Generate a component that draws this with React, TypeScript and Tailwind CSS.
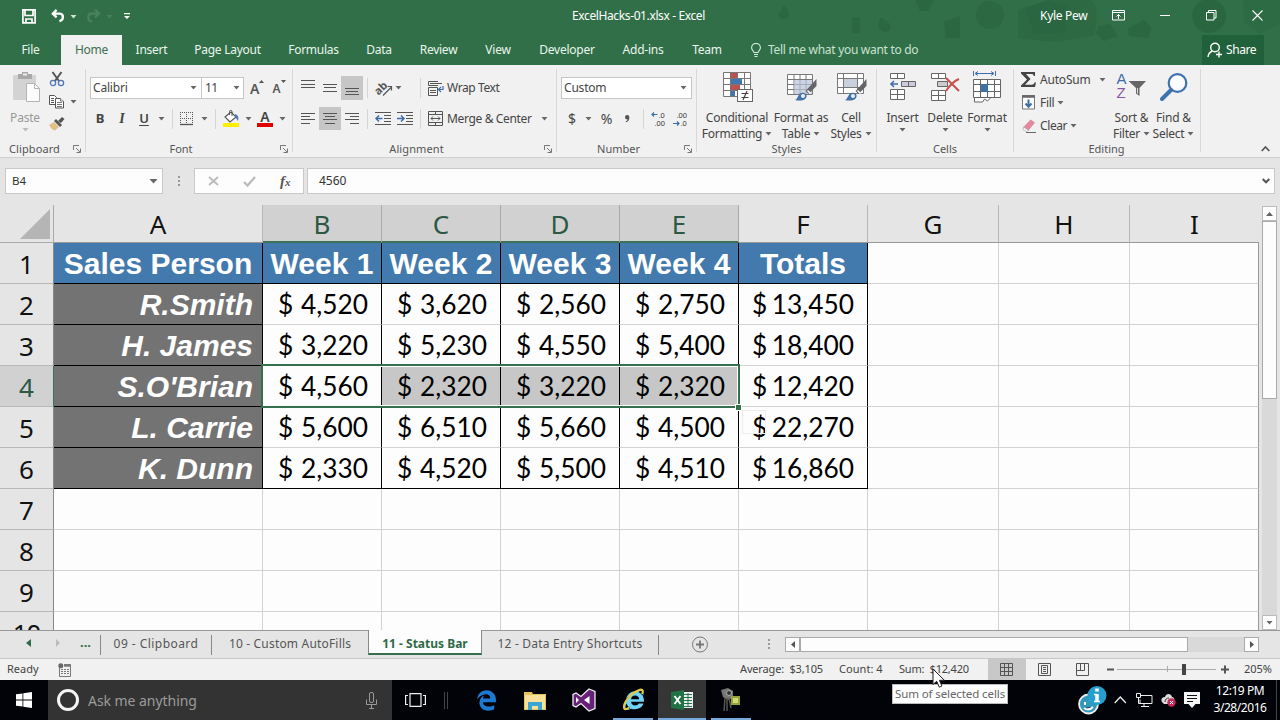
import React from "react";
import { FaEdgeLegacy, FaInternetExplorer } from "react-icons/fa6";

const UI = "font-['Noto_Sans',sans-serif]";
type Kids = { children?: React.ReactNode; c?: string };

const Arrow = ({ c = "text-[#666]" }: { c?: string }) => (
  <svg className={`shrink-0 ${c}`} width="7" height="4" viewBox="0 0 7 4"><path d="M.5 0h6L3.5 3.6z" fill="currentColor" /></svg>
);
const Slot = ({ children, c = "w-[22px]" }: Kids) => (
  <div className={`flex h-full shrink-0 items-center justify-center ${c}`}>{children}</div>
);
const Sep = ({ c = "h-5" }: { c?: string }) => <div className={`w-px shrink-0 bg-[#d5d5d5] ${c}`} />;

const Launcher = () => (
  <svg width="8" height="8" viewBox="0 0 8 8" fill="none" stroke="#777"><path d="M.5 5V.5H6M3 3l4 4M7.5 3.5v4h-4" /></svg>
);

function Group({ w, label, launcher, labelPad = "", children }: { w: string; label: string; launcher?: boolean; labelPad?: string; children: React.ReactNode }) {
  return (
    <section className={`flex h-full shrink-0 ${w}`}>
      <div className="flex min-w-0 flex-1 flex-col">
        <div className="h-[75px]">{children}</div>
        <div className="flex h-[17px] items-center">
          <span className={`flex-1 text-center text-[11px] leading-[17px] text-[#555] ${labelPad}`}>{label}</span>
          {launcher && <span className="mr-1"><Launcher /></span>}
        </div>
      </div>
      <div className="mt-1 h-[83px] w-px bg-[#d8d8d8]" />
    </section>
  );
}

/* ---------- ribbon icons ---------- */
const Lines = ({ rows }: { rows: [number, number, number][] }) => (
  <svg width="16" height="16" viewBox="0 0 16 16" stroke="#555">
    {rows.map(([y, a, b]) => <path key={y} d={`M${a} ${y}.5H${b}`} />)}
  </svg>
);
const PasteIcon = () => (
  <svg width="30" height="32" viewBox="0 0 30 32">
    <rect x="1" y="4" width="23" height="25" rx="1" fill="#d3d3d3" />
    <path d="M6 3h4V1h6v2h4v5H6z" fill="#a8a8a8" /><rect x="11" y="2.5" width="4" height="2" fill="#eee" />
    <path d="M14.5 12.5h8l5 5v13h-13z" fill="#fcfcfc" stroke="#b4b4b4" /><path d="M22.5 12.5v5h5" fill="none" stroke="#b4b4b4" />
  </svg>
);
const CutIcon = () => (
  <svg width="16" height="16" viewBox="0 0 16 16" fill="none">
    <path d="M3.5 1l6.5 9M12.5 1L6 10" stroke="#555" strokeWidth="2" />
    <circle cx="4" cy="12" r="2.6" stroke="#4f78b5" strokeWidth="1.3" /><circle cx="12" cy="12" r="2.6" stroke="#4f78b5" strokeWidth="1.3" />
  </svg>
);
const CopyIcon = () => (
  <svg width="16" height="15" viewBox="0 0 16 15" fill="#fff" stroke="#555">
    <path d="M.5 1.5h5l2 2v7h-7z" /><path d="M2 4.5h3M2 6.5h3M2 8.5h3" />
    <path d="M6.500 4.500h5l3 3v6.500h-8z" /><path d="M8 8.500h5M8 10.500h5M8 12.500h5M11.500 4.500v2.500h3" strokeWidth=".8" />
  </svg>
);
const BrushIcon = () => (
  <svg width="16" height="15" viewBox="0 0 16 15">
    <path d="M0 9l5-3 5 5-4 3.500c-2-.5-4-2-6-5.500z" fill="#e3bf86" /><path d="M5 5l2-2 6 6-2 2z" fill="#555" /><path d="M9 5l4-4 2.500 2L12 7z" fill="#555" />
  </svg>
);
const BorderIcon = () => (
  <svg width="14" height="14" viewBox="0 0 14 14" fill="none" stroke="#555">
    <path strokeDasharray="1 1" d="M0 .5h13M.5 0v13M12.500 0v13M6.500 0v13M0 6.500h13" /><path d="M0 12.500h13" strokeWidth="1.300" />
  </svg>
);
const BucketIcon = () => (
  <svg width="17" height="17" viewBox="0 0 17 17">
    <path d="M2 7l6-5 5 5-6 5z" fill="#fff" stroke="#555" strokeWidth="1.100" /><path d="M6.500 5V1.500c0-1.500 2.500-1.500 2.500 0V6" fill="none" stroke="#555" />
    <path d="M12 4c3 1 4 3 3 7-1-2-2-3-3-3z" fill="#4f78b5" /><rect y="13" width="16" height="4" fill="#ffee00" />
  </svg>
);
const OrientIcon = () => (
  <svg className="overflow-visible" width="17" height="15" viewBox="0 0 17 15" fill="none" stroke="#555">
    <text x="-1.500" y="11" fontSize="11" fontWeight="700" transform="rotate(-45 5 8)" fill="#555" stroke="none" fontFamily="Noto Sans">ab</text>
    <path d="M7 14.500l8-8M11.500 5.500H15.500v4" strokeWidth="1.200" />
  </svg>
);
const IndentIcon = ({ right }: { right?: boolean }) => (
  <svg width="17" height="14" viewBox="0 0 17 14" fill="none" stroke="#555">
    <path d="M0 .5h16M9 3.500h7M9 6.500h7M9 9.500h7M0 12.500h16" />
    <path d={right ? "M0 6.500h7M4 3.500l3 3-3 3" : "M7.500 6.500h-7M4 3.500l-3 3 3 3"} stroke="#3d6ea8" strokeWidth="1.500" />
  </svg>
);
const WrapIcon = () => (
  <svg width="16" height="15" viewBox="0 0 16 15" fill="none" stroke="#555">
    <path d="M10 4.500H.5V.5H10M.5 6.500h9v8h-9zM2 2.500h12M2 9.500h6M2 11.500h6" /><path d="M15 5v3.500h-4M13 6l-2.500 2.500L13 11" stroke="#3d6ea8" strokeWidth="1.200" />
  </svg>
);
const MergeIcon = () => (
  <svg width="15" height="15" viewBox="0 0 15 15" fill="none" stroke="#555">
    <path d="M.5.5h14v14H.5zM.5 3.500h14M.5 11.500h14M7.500 .5v3M7.500 11.500v3M3 7.500h9M5 5.500l-2 2 2 2M10 5.500l2 2-2 2" />
  </svg>
);
const DecIcon = ({ less }: { less?: boolean }) => (
  <svg className="overflow-visible" width="16" height="16" viewBox="0 0 16 16">
    <text x={less ? 3.5 : 7.5} y="6.500" fontSize="7.500" fill="#333" fontFamily="Liberation Sans">{less ? ".00" : ".0"}</text>
    <text x={less ? 7.500 : 3.500} y="15" fontSize="7.500" fill="#333" fontFamily="Liberation Sans">{less ? ".0" : ".00"}</text>
    <path d={less ? "M0 12.500h6M4 10.500l2 2-2 2" : "M6.500 3.500h-6M3 1.500l-2 2 2 2"} fill="none" stroke="#3d6ea8" strokeWidth="1.200" />
  </svg>
);
const CondIcon = () => (
  <svg width="30" height="30" viewBox="0 0 30 30">
    <path d="M.5.5h27v24H.5zM.5 6.500h27M.5 12.500h27M.5 18.500h27M7.500 .5v24M14.500 .5v24M21.500 .5v24" fill="#fff" stroke="#777" />
    <path d="M8 1h6v5H8zM8 13h9v5H8z" fill="#c0504d" /><path d="M8 7h11v5H8zM8 19h4v5H8z" fill="#3f78b0" />
    <rect x="14.500" y="17.500" width="15" height="12" fill="#fff" stroke="#666" /><path d="M18.500 21.500h7M18.500 25.500h7M24 19l-4 9" stroke="#444" strokeWidth="1.200" />
  </svg>
);
const PaintBrush = () => (
  <g><path d="M29.500 7v7l-8 8-3-3z" fill="#666" /><path d="M20.500 18.500l3 3" stroke="#fff" strokeWidth="1.500" />
    <path d="M8 28c3-1 3-6 6-7 4-1 7 2 5 5-2 3-7 3-11 2z" fill="#4472a8" /><circle cx="16" cy="24" r="2" fill="#e9f1fa" /></g>
);
const TableIcon = () => (
  <svg width="30" height="30" viewBox="0 0 30 30">
    <path d="M.5 2.500h25v20H.5zM.5 7.500h25M.5 12.500h25M.5 17.500h25M7 2.500v20M13 2.500v20M19 2.500v20" fill="#fff" stroke="#777" />
    <path d="M7 8h18v14H7z" fill="#b8c3d8" fillOpacity=".7" /><PaintBrush />
  </svg>
);
const CellStyleIcon = () => (
  <svg width="30" height="30" viewBox="0 0 30 30">
    <path d="M.5 1.500h26v20H.5zM.5 6.500h26M.5 15.500h26M6.500 1.500v20M20.500 1.500v20" fill="#fff" stroke="#777" />
    <path d="M7 7h13v8H7z" fill="#c9d0de" /><PaintBrush />
  </svg>
);
const InsertIcon = () => (
  <svg width="28" height="28" viewBox="0 0 28 28" fill="#fff" stroke="#666">
    <path d="M1.500.5h14v5h-14zM8.500.5v5M1.500 16.500h14v10h-14zM8.500 16.500v10M1.500 21.500h14" /><path d="M12.500 8.500h14v5h-14zM19.500 8.500v5" fill="#ccd" />
    <path d="M9 11H2M5 8l-3 3 3 3" fill="none" stroke="#3d6ea8" strokeWidth="1.600" />
  </svg>
);
const DeleteIcon = () => (
  <svg width="30" height="28" viewBox="0 0 30 28" fill="#fff" stroke="#666">
    <path d="M1.500.5h14v5h-14zM8.500.5v5M1.500 17.500h14v10h-14zM8.500 17.500v10M1.500 22.500h14" /><path d="M7.500 8.500h10v5h-10z" fill="#ccc" />
    <path d="M16 5l13 13M29 6c-5 2-9 6-13 12" fill="none" stroke="#c9504c" strokeWidth="2" />
  </svg>
);
const FormatIcon = () => (
  <svg width="28" height="32" viewBox="0 0 28 32" fill="none" stroke="#666">
    <path d="M.5 8.500h27v18H.5zM.5 13.500h27M.5 20.500h27M7.500 8.500v18M14.500 8.500v18M21.500 8.500v18" fill="#fff" />
    <path d="M8 13h7v8H8z" fill="#3f72aa" stroke="none" /><path d="M1.500 27v4h8l2-3 3 2 3-3" fill="#fff" />
    <path d="M.5 0v5M22.500 0v5M3 2.500h17M5 .5l-3 2 3 2M18 .5l3 2-3 2" stroke="#3d6ea8" />
  </svg>
);
const SumIcon = () => (
  <svg width="15" height="15" viewBox="0 0 15 15"><path d="M0 0h14v4h-1.200c-.3-1.500-1-2-2.500-2H5l4.500 5L4 12.700h6.500c1.800 0 2.500-.7 3-2.200H15l-1 4.500H0v-1.500l6-6-6-6z" fill="#444" /></svg>
);
const FillIcon = () => (
  <svg width="14" height="15" viewBox="0 0 14 15" fill="none"><path d="M.5.5h12v13.500H.5z" fill="#fff" stroke="#777" /><path d="M0 1.500h13" stroke="#666" strokeWidth="2.500" /><path d="M6.500 4.500V12M3.500 8.500l3 3.300 3-3.300" stroke="#3d6ea8" strokeWidth="2" /></svg>
);
const EraserIcon = () => (
  <svg width="15" height="14" viewBox="0 0 15 14"><path d="M1.500 8l7-7.500 4.500 3-6.500 8z" fill="#e28a9d" /><path d="M1.500 8l5 3.500-2 1-3.500-2z" fill="#fff" stroke="#999" strokeWidth=".6" /><path d="M4 13.500h10" stroke="#666" /></svg>
);
const SortIcon = () => (
  <div className="flex h-[30px] w-[30px]">
    <div className="flex w-[11px] flex-col font-['Liberation_Sans',sans-serif] text-[15px] leading-[14px]"><span className="text-[#3d6ea8]">A</span><span className="text-[#8a55a5]">Z</span></div>
    <svg width="19" height="30" viewBox="11 0 19 30"><path d="M11.500 9h17.500L22.500 16v8l-3.500-2.500V16z" fill="#666" /><path d="M20.500 16v5.500" stroke="#ddd" /></svg>
  </div>
);
const FindIcon = () => (
  <svg width="28" height="28" viewBox="0 0 28 28" fill="none" stroke="#3f72b0"><circle cx="17.500" cy="10" r="8.800" fill="#fcfcff" strokeWidth="2.200" /><path d="M11 17l-9 9" strokeWidth="4" strokeLinecap="round" /></svg>
);

const Big = ({ w, icon, a, b, dim, iconPad = "" }: { w: string; icon: React.ReactNode; a: string; b?: string; dim?: boolean; iconPad?: string }) => (
  <div className={`flex shrink-0 flex-col items-center whitespace-nowrap text-[12px] ${w} ${dim ? "text-[#999]" : "text-[#444]"}`}>
    <div className={`flex h-[34px] items-center pt-0.5 ${iconPad}`}>{icon}</div>
    <span className="mt-[7px] h-4 leading-4 tracking-[-0.2px]">{a}</span>
    <span className="flex h-4 items-center gap-[3px] leading-4 tracking-[-0.25px]">{b}<Arrow c={`${b ? "" : "-mt-2"} ${dim ? "text-[#bbb]" : "text-[#666]"}`} /></span>
  </div>
);

const menu: [string, string][] = [
  ["File", "w-[61px]"], ["Home", "w-[61px]"], ["Insert", "w-[59px]"], ["Page Layout", "w-[93px]"], ["Formulas", "w-[79px]"], ["Data", "w-[52px]"],
  ["Review", "w-[67px]"], ["View", "w-[52px]"], ["Developer", "w-[86px]"], ["Add-ins", "w-[66px]"], ["Team", "w-[62px]"],
];

function Header() {
  return (
    <header className="relative h-[65px] bg-[#316f48] text-white">
      <svg className="absolute right-0 top-0" width="560" height="56" viewBox="720 0 560 56" fill="#296540">
        <path opacity=".7" d="M784 4c4 6 6 9 5 12-2 4-9 4-11 0 0-3 4-6 6-12zM852 17h8v16h-8zM880 18c7 1 12 6 10 12-5 4-10 1-12-4zM915 0h19l-6 11h-8zM944 22l16-6v22h-14z" />
        <circle cx="990" cy="15" r="14" opacity=".6" />
        <path opacity=".55" d="M1018 10l32-10h38c10 0 10 16 6 36l-40 6-36-4z" /><path opacity=".7" d="M1026 8l22-8 20 6-4 26-30 2z" />
        <path opacity=".75" d="M1098 26l12-2 8 12-14 5-8-7zM1128 28l16-8 7 7-2 11-20-2z" /><circle cx="1209" cy="16" r="17" opacity=".8" />
        <path opacity=".45" d="M1243 0h37v24l-20 10-16-12z" />
      </svg>
      <div className="relative flex h-[35px] items-center">
        <svg className="ml-[22px] mt-[-2px] h-[15px] w-[14px]" viewBox="0 0 14 15" fill="none" stroke="#fff" strokeWidth="1.700"><path d="M.9.9h12.200v13H.9zM3 1v5.500h8V1M4 14v-4h6v4" /></svg>
        <svg className="ml-[15px] mt-[-4px]" width="14" height="14" viewBox="0 0 15 14" fill="none" stroke="#fff" strokeWidth="2.500"><path d="M6 .5L2 4.500 6 8.500M2 4.500h7c5 0 5 7 0 8" /></svg>
        <span className="ml-[5px] mt-[-2px] flex"><Arrow c="text-[#cfe3d6]" /></span>
        <svg className="ml-[9px] mt-[-4px]" width="15" height="14" viewBox="0 0 15 14" fill="none" stroke="#49805d" strokeWidth="2.300"><path d="M9 .5l4 4L9 8.500M13 4.500H6c-5 0-5 7 0 8" /></svg>
        <span className="ml-[5px] mt-[-2px] flex"><Arrow c="text-[#49805d]" /></span>
        <svg className="ml-[11px] mt-[-2px]" width="7" height="7" viewBox="0 0 7 7" fill="#fff"><path d="M0 0h6v1.200H0zM0 3h6L3 6z" /></svg>
        <span className="ml-[441px] mt-[-4px] w-[136px] whitespace-nowrap text-[12px] tracking-[-0.38px]">ExcelHacks-01.xlsx - Excel</span>
        <span className="ml-[332px] mt-[-4px] w-[72px] whitespace-nowrap text-[12px] tracking-[-0.3px]">Kyle Pew</span>
        <svg className="mt-[-5px]" width="14" height="11" viewBox="0 0 14 11" fill="none" stroke="#fff"><path d="M.5.5h12v9.500H.5zM.5 2.500h12M6.500 9V4.500M4.500 6.500l2-2 2 2" /></svg>
        <svg className="ml-[34px] mt-[-4px]" width="11" height="2" viewBox="0 0 11 2" fill="#fff"><path d="M0 0h10v1H0z" /></svg>
        <svg className="ml-[35px] mt-[-5px]" width="11" height="11" viewBox="0 0 11 11" fill="none" stroke="#fff"><path d="M.5 2.500h7.500V10H.5zM2.500 2.500v-2h7.500V8H8" /></svg>
        <svg className="ml-[35px] mt-[-5px]" width="11" height="11" viewBox="0 0 11 11" stroke="#fff" strokeWidth="1.100"><path d="M.5.5l10 10M10.500.5l-10 10" /></svg>
      </div>
      <nav className="relative flex h-[30px] items-center text-[12px] tracking-[-0.25px]">
        {menu.map(([m, w], i) => (
          <div key={m} className={`flex h-full shrink-0 items-center justify-center whitespace-nowrap ${w} ${i === 1 ? "bg-[#f1f1f1] text-[#3d6f50]" : "text-[#eaf6ee]"}`}>{m}</div>
        ))}
        <svg className="ml-[13px]" width="10" height="15" viewBox="0 0 10 15" fill="none" stroke="#d7ecdf" strokeWidth="1.100"><path d="M3 9.500C3 8 .6 7.300.6 4.800a4.400 4.400 0 0 1 8.800 0C9.400 7.300 7 8 7 9.500zM3 11.500h4M3.500 13.500h3" /></svg>
        <span className="ml-[7px] w-[434px] whitespace-nowrap tracking-[-0.3px] text-[#c9e2d1]">Tell me what you want to do</span>
        <div className="flex h-full w-[62px] items-center bg-[#20603a] pl-[5px]">
          <svg width="16" height="16" viewBox="0 0 16 16" fill="none" stroke="#fff" strokeWidth="1.400"><circle cx="8" cy="5.500" r="4.300" /><path d="M1 15c.3-3.500 2-5 4.500-6M12 9.500v6M9 12.500h6" /></svg>
          <span className="ml-[3px] tracking-[-0.4px]">Share</span>
        </div>
      </nav>
    </header>
  );
}

function Ribbon() {
  return (
    <div className="flex h-[93px] border-b border-[#cfcfcf] bg-[#f1f1f1]">
      <Group w="w-[86px]" label="Clipboard" launcher labelPad="-ml-1 tracking-[0.1px]">
        <div className="flex pt-1">
          <Big w="w-[50px]" icon={<PasteIcon />} a="Paste" dim iconPad="pl-1" />
          <div className="-ml-px flex flex-col gap-[7px] pt-[2px]">
            <CutIcon /><div className="flex items-center gap-[5px]"><CopyIcon /><Arrow /></div><BrushIcon />
          </div>
        </div>
      </Group>

      <Group w="w-[207px]" label="Font" launcher labelPad="-ml-1">
        <div className="flex h-[35px] items-end pb-px pl-1 text-[12px] text-[#444]">
          <div className="flex h-[22px] w-[112px] items-center justify-between border border-[#c6c6c6] bg-white pl-[2px] pr-1"><span className="tracking-[-0.2px]">Calibri</span><Arrow /></div>
          <div className="-ml-px flex h-[22px] w-[43px] items-center justify-between border border-[#c6c6c6] bg-white pl-[3px] pr-[3px]"><span className="tracking-[-0.6px]">11</span><Arrow /></div>
          <div className="ml-[6px] flex h-[22px] items-center text-[14px] font-semibold text-[#555]">A<svg className="mb-[13px]" width="5" height="4" viewBox="0 0 5 4"><path d="M0 3h5L2.500 0z" fill="#555" /></svg></div>
          <div className="ml-[8px] flex h-[22px] items-center pt-px text-[12px] font-semibold text-[#555]">A<svg className="mb-[13px]" width="5" height="4" viewBox="0 0 5 4"><path d="M0 0h5L2.500 3z" fill="#555" /></svg></div>
        </div>
        <div className="mt-[7px] flex h-[23px] items-center pl-[3px] text-[13px] text-[#444]">
          <Slot><b>B</b></Slot><Slot><i className="font-['Liberation_Serif',serif] text-[14px] font-bold">I</i></Slot><Slot><span className="font-semibold underline underline-offset-2">U</span></Slot>
          <Slot c="w-[12px]"><Arrow /></Slot><Slot c="w-[10px]"><Sep /></Slot><Slot c="w-[20px]"><BorderIcon /></Slot><Slot c="w-[14px]"><Arrow /></Slot>
          <Slot c="w-[8px]"><Sep /></Slot><Slot c="w-[24px]"><BucketIcon /></Slot><Slot c="w-[10px]"><Arrow /></Slot>
          <Slot c="w-[24px]"><span className="flex h-[17px] w-4 flex-col items-center border-b-4 border-[#e00000] text-[14px] font-semibold leading-[13px]">A</span></Slot><Slot c="w-[10px]"><Arrow /></Slot>
        </div>
      </Group>

      <Group w="w-[264px]" label="Alignment" launcher labelPad="-ml-1 tracking-[0.1px]">
        <div className="flex h-[35px] items-end pl-1 text-[12px] text-[#444]">
          <div className="flex h-[24px] items-center">
            <Slot><Lines rows={[[0, 1, 15], [4, 1, 15], [7, 1, 15]]} /></Slot>
            <Slot><Lines rows={[[4, 1, 15], [7, 2, 14], [11, 1, 15]]} /></Slot>
            <Slot c="w-[22px] bg-[#c6c6c6]"><Lines rows={[[8, 1, 15], [11, 2, 14], [14, 1, 15]]} /></Slot>
            <Slot c="w-[8px]"><Sep /></Slot><Slot c="w-[22px] pl-1"><OrientIcon /></Slot><Slot c="w-[10px]"><Arrow /></Slot>
            <div className="w-[17px]" /><Sep /><div className="w-[7px]" /><WrapIcon /><span className="ml-[3px] whitespace-nowrap tracking-[-0.4px]">Wrap Text</span>
          </div>
        </div>
        <div className="mt-[7px] flex h-[23px] items-center pl-1 text-[12px] text-[#444]">
          <Slot><Lines rows={[[2, 1, 15], [5, 1, 10], [8, 1, 15], [12, 1, 10]]} /></Slot>
          <Slot c="w-[22px] bg-[#c6c6c6]"><Lines rows={[[2, 1, 15], [5, 3, 13], [8, 1, 15], [12, 3, 13]]} /></Slot>
          <Slot><Lines rows={[[2, 1, 15], [5, 6, 15], [8, 1, 15], [12, 6, 15]]} /></Slot>
          <Slot c="w-[8px]"><Sep /></Slot><Slot c="w-[24px]"><IndentIcon /></Slot><Slot c="w-[21px]"><IndentIcon right /></Slot>
          <div className="w-[4px]" /><Sep /><div className="w-[7px]" /><MergeIcon /><span className="ml-1 w-[94px] whitespace-nowrap tracking-[-0.35px]">Merge &amp; Center</span><Arrow />
        </div>
      </Group>

      <Group w="w-[140px]" label="Number" launcher labelPad="-ml-1">
        <div className="flex h-[35px] items-end pb-px pl-1 text-[12px] text-[#444]">
          <div className="flex h-[22px] w-[131px] items-center justify-between border border-[#c6c6c6] bg-white pl-[2px] pr-1"><span className="tracking-[-0.2px]">Custom</span><Arrow /></div>
        </div>
        <div className="mt-[7px] flex h-[23px] items-center pl-1 text-[14px] text-[#444]">
          <Slot>$</Slot><Slot c="w-[11px]"><Arrow /></Slot><Slot c="w-[25px]">%</Slot><Slot c="w-[17px]"><svg width="5" height="8" viewBox="0 0 5 8"><path d="M0 2.200a2.200 2.200 0 0 1 4.400 0C4.500 5 3 6.800.8 7.300v-1C2 5.900 2.500 5.200 2.500 4.300 1 4.600 0 3.600 0 2.200z" fill="#555" /></svg></Slot>
          <Slot c="w-[14px]"><Sep /></Slot><Slot c="w-[17px]"><DecIcon /></Slot><Slot c="w-[27px]"><DecIcon less /></Slot>
        </div>
      </Group>

      <Group w="w-[180px]" label="Styles">
        <div className="flex pl-[6px] pt-1">
          <Big w="w-[68px]" icon={<CondIcon />} a="Conditional" b="Formatting" iconPad="pl-[2px]" /><Big w="w-[60px]" icon={<TableIcon />} a="Format as" b="Table" iconPad="pl-[2px]" /><Big w="w-[40px]" icon={<CellStyleIcon />} a="Cell" b="Styles" iconPad="pl-[2px]" />
        </div>
      </Group>

      <Group w="w-[137px]" label="Cells">
        <div className="flex pl-1 pt-1">
          <Big w="w-[43px]" icon={<InsertIcon />} a="Insert" /><Big w="w-[42px]" icon={<DeleteIcon />} a="Delete" /><Big w="w-[42px]" icon={<FormatIcon />} a="Format" />
        </div>
      </Group>

      <Group w="w-[187px]" label="Editing" labelPad="-ml-px">
        <div className="flex pl-[7px] text-[12px] text-[#444]">
          <div className="flex w-[90px] flex-col pt-[3px]">
            <div className="flex h-[23px] items-center"><span className="w-[19px]"><SumIcon /></span><span className="w-[59px] tracking-[-0.2px]">AutoSum</span><Arrow /></div>
            <div className="flex h-[23px] items-center gap-[3px]"><span className="w-4 pl-px"><FillIcon /></span><span className="tracking-[-0.3px]">Fill</span><Arrow /></div>
            <div className="flex h-[23px] items-center gap-[3px]"><span className="w-4 pl-px"><EraserIcon /></span><span className="tracking-[-0.4px]">Clear</span><Arrow /></div>
          </div>
          <div className="flex pt-1"><Big w="w-[41px]" icon={<SortIcon />} a="Sort &amp;" b="Filter" /><Big w="w-[43px]" icon={<FindIcon />} a="Find &amp;" b="Select" /></div>
        </div>
      </Group>
      <div className="flex flex-1 items-end justify-end pb-[5px] pr-[10px]"><svg width="9" height="6" viewBox="0 0 9 6" fill="none" stroke="#555" strokeWidth="1.700"><path d="M.7 5l3.800-4 3.800 4" /></svg></div>
    </div>
  );
}

function FormulaBar() {
  return (
    <div className="flex h-[47px] items-start bg-[#e5e5e5] px-[5px] pt-[10px] text-[11px] text-[#333]">
      <div className="flex h-[26px] w-[158px] items-center justify-between border border-[#c9c9c9] bg-[#fdfdfd] pl-[6px] pr-1"><span className="text-[11.500px]">B4</span><svg width="9" height="5" viewBox="0 0 9 5"><path d="M.5 0h8l-4 4.500z" fill="#666" /></svg></div>
      <svg className="ml-[14px] mt-2" width="4" height="11" viewBox="0 0 4 11" fill="#999"><path d="M1 0h2v2H1zM1 4h2v2H1zM1 8h2v2H1z" /></svg>
      <div className="ml-[13px] flex h-[26px] w-[110px] items-center border border-[#c9c9c9] bg-[#fdfdfd]">
        <svg className="ml-[13px]" width="11" height="10" viewBox="0 0 11 10" stroke="#bbb" strokeWidth="1.800"><path d="M1 1l9 8M10 1L1 9" /></svg>
        <svg className="ml-[24px]" width="13" height="11" viewBox="0 0 13 11" fill="none" stroke="#bbb" strokeWidth="2.300"><path d="M1 6l3.500 3.500L12 1" /></svg>
        <i className="ml-[24px] font-['Liberation_Serif',serif] text-[15px] font-bold leading-none text-[#555]">f<span className="text-[11px]">x</span></i>
      </div>
      <div className="ml-[3px] flex h-[26px] w-[968px] items-center justify-between border border-[#c9c9c9] bg-[#fdfdfd] pl-[11px] pr-1"><span className="text-[12px]">4560</span><svg width="8" height="6" viewBox="0 0 8 6" fill="none" stroke="#555" strokeWidth="2"><path d="M.7 1L4 4.300 7.300 1" /></svg></div>
    </div>
  );
}

const cols: [string, string][] = [
  ["A", "w-[209px]"], ["B", "w-[119px]"], ["C", "w-[119px]"], ["D", "w-[119px]"], ["E", "w-[119px]"],
  ["F", "w-[129px]"], ["G", "w-[131px]"], ["H", "w-[131px]"], ["I", "w-[129px]"],
];
const data: string[][] = [
  ["Sales Person", "Week 1", "Week 2", "Week 3", "Week 4", "Totals"],
  ["R.Smith", "4,520", "3,620", "2,560", "2,750", "13,450"],
  ["H. James", "3,220", "5,230", "4,550", "5,400", "18,400"],
  ["S.O'Brian", "4,560", "2,320", "3,220", "2,320", "12,420"],
  ["L. Carrie", "5,600", "6,510", "5,660", "4,500", "22,270"],
  ["K. Dunn", "2,330", "4,520", "5,500", "4,510", "16,860"],
  [], [], [], [],
];

function cellClass(r: number, c: number) {
  if (r > 5 || c > 5) return `border-b-[#d2d2d2] bg-[#fdfdfd] ${c === 8 ? "border-r-[#999]" : "border-r-[#d2d2d2]"}`;
  if (r === 0) return "justify-center border-black bg-[#437aad] pt-px font-['Liberation_Sans',sans-serif] font-bold text-[30px] text-white";
  if (c === 0) return "justify-end border-black bg-[#737373] pr-[9px] pt-px font-['Liberation_Sans',sans-serif] font-bold italic text-[30px] text-white";
  const base = "justify-between border-r-black pr-[13px] pl-[15px] pt-px font-['Lato',sans-serif] text-[26.300px] text-black";
  const edge = r === 5 ? "border-b-black" : "border-b-[#d2d2d2]";
  return `${base} ${edge} ${r === 3 && c > 1 && c < 5 ? "bg-[#c7c7c7]" : "bg-[#fdfdfd]"}`;
}

function Sheet() {
  return (
    <div className="flex h-[425px] bg-[#e5e5e5]">
      <div className="relative h-[425px] w-[1259px] overflow-hidden">
        <div className="flex h-[38px]">
          <div className="flex w-[54px] shrink-0 items-end justify-end border-b border-r border-[#aaa] pb-[3px] pr-[3px]"><svg width="30" height="30" viewBox="0 0 30 30"><path d="M30 0v30H0z" fill="#b5b5b5" /></svg></div>
          {cols.map(([n, w], i) => (
            <div key={n} className={`flex shrink-0 items-center justify-center pt-px text-[26px] leading-none ${w} ${i > 0 && i < 5 ? "border-b-2 border-r border-b-[#3c7354] border-r-[#aaa] bg-[#d1d1d1] text-[#2c5844]" : i === 8 ? "border-b border-b-[#999] text-[#111]" : "border-b border-r border-b-[#999] border-r-[#b8b8b8] text-[#111]"}`}>{n}</div>
          ))}
        </div>
        {data.map((row, r) => (
          <div key={r} className="flex h-[41px]">
            <div className={`flex w-[54px] shrink-0 items-center justify-center border-b border-r pt-px text-[26px] leading-none ${r === 9 ? "tracking-[-1px]" : ""} ${r === 3 ? "border-b-[#b8b8b8] border-r-[#3c7354] bg-[#d1d1d1] text-[#2c5844]" : "border-b-[#b8b8b8] border-r-[#888] text-[#111]"}`}>{r + 1}</div>
            {cols.map(([n, w], c) => (
              <div key={n} className={`flex shrink-0 items-center whitespace-nowrap border-b border-r leading-none ${w} ${cellClass(r, c)}`}>
                {r > 0 && r < 6 && c > 0 && c < 6 ? <><span className={c === 5 ? "-ml-[2px]" : ""}>$</span><span>{row[c]}</span></> : row[c]}
              </div>
            ))}
          </div>
        ))}
        <div className="absolute left-[261px] top-[159px] h-[44px] w-[479px] border-2 border-[#35704d] shadow-[inset_0_0_0_1px_#fff]" />
        <div className="absolute left-[735px] top-[199px] h-[7px] w-[7px] border border-white bg-[#35704d]" />
        <div className="absolute left-[742px] top-[205px] h-[24px] w-[24px] border border-[#ededed]" />
      </div>
      <div className="flex w-[21px] flex-col pl-[3px] pt-px">
        <div className="flex h-[15px] w-[15px] items-center justify-center border border-[#bbb] bg-[#fdfdfd]"><svg width="7" height="4" viewBox="0 0 7 4"><path d="M0 4h7L3.500 0z" fill="#666" /></svg></div>
        <div className="h-[178px] w-[15px] border border-[#aaa] bg-[#fdfdfd]" />
        <div className="w-[15px] flex-1 bg-[#d9d9d9]" />
        <div className="flex h-[15px] w-[15px] items-center justify-center border border-[#bbb] bg-[#fdfdfd]"><Arrow /></div>
      </div>
    </div>
  );
}

function SheetTabs() {
  return (
    <div className="flex h-[29px] border-b border-[#c6c6c6] bg-[#e5e5e5] text-[12px] text-[#555]">
      <div className="flex h-[24px] w-[368px] items-center border-t border-[#999]">
        <svg className="ml-[26px] mt-px" width="5" height="8" viewBox="0 0 5 8"><path d="M5 0v8L0 4z" fill="#2e6b49" /></svg>
        <svg className="ml-[25px] mt-px" width="5" height="8" viewBox="0 0 5 8"><path d="M0 0v8l4-4z" fill="#bbb" /></svg>
        <b className="ml-[19px] w-[20px] text-[13px] text-[#2e6b49]">...</b>
        <div className="mt-1 h-[20px] w-px bg-[#888]" /><span className="w-[110px] pt-0.5 text-center tracking-[0.45px]">09 - Clipboard</span>
        <div className="mt-1 h-[20px] w-px bg-[#888]" /><span className="w-[156px] pt-0.5 text-center tracking-[0.18px]">10 - Custom AutoFills</span>
      </div>
      <div className="flex h-[25px] w-[114px] items-center justify-center whitespace-nowrap border-x border-b-2 border-x-[#888] border-b-[#35704d] bg-[#fdfdfd] pt-1 font-bold text-[#2e6b49]">11 - Status Bar</div>
      <div className="flex h-[24px] flex-1 items-center border-t border-[#999]">
        <span className="w-[176px] pt-0.5 text-center tracking-[0.2px]">12 - Data Entry Shortcuts</span><div className="mt-1 h-[20px] w-px bg-[#888]" />
        <svg className="ml-[33px] mt-[4px]" width="17" height="17" viewBox="0 0 17 17" fill="none" stroke="#777"><circle cx="8" cy="8.500" r="7.500" /><path d="M8 4.500v8M4 8.500h8" strokeWidth="1.800" /></svg>
        <svg className="ml-[59px] mt-1" width="2" height="11" viewBox="0 0 2 11" fill="#999"><path d="M0 0h2v2H0zM0 4h2v2H0zM0 8h2v2H0z" /></svg>
        <div className="ml-[15px] mt-[4px] flex h-[15px] w-[15px] items-center justify-center border border-[#aaa] bg-[#fdfdfd]"><svg width="4" height="7" viewBox="0 0 4 7"><path d="M4 0v7L0 3.500z" fill="#555" /></svg></div>
        <div className="mt-[4px] h-[15px] w-[388px] border border-[#aaa] bg-[#fdfdfd]" /><div className="mt-[4px] h-[15px] w-[56px] bg-[#d9d9d9]" />
        <div className="mt-[4px] flex h-[15px] w-[15px] items-center justify-center border border-[#aaa] bg-[#fdfdfd]"><svg width="4" height="7" viewBox="0 0 4 7"><path d="M0 0v7l4-3.500z" fill="#555" /></svg></div>
      </div>
    </div>
  );
}

function StatusBar() {
  return (
    <div className="flex h-[21px] items-center bg-[#f1f1f1] text-[11px] text-[#444]">
      <span className="ml-[7px] w-[51px]">Ready</span>
      <svg width="14" height="14" viewBox="0 0 14 14" fill="none" stroke="#777"><path d="M1.500 5v8.500h11V1.500H6" /><path d="M6 2.500h6.500" strokeWidth="2.500" /><circle cx="2.800" cy="2.800" r="2.500" fill="#666" stroke="none" /><path d="M3 6.500h8M3 8.500h8M3 10.500h8" strokeDasharray="2 1" /></svg>
      <span className="ml-[668px] w-[99px] whitespace-nowrap tracking-[-0.15px]">Average:&nbsp; $3,105</span>
      <span className="w-[60px] whitespace-nowrap tracking-[0.05px]">Count: 4</span>
      <span className="w-[89px] whitespace-nowrap tracking-[-0.2px]">Sum:&nbsp; $12,420</span>
      <div className="flex h-full w-[38px] items-center justify-center bg-[#c8c8c8] pr-0.5"><svg width="13" height="13" viewBox="0 0 13 13" fill="none" stroke="#555"><path d="M.5.5h12v12H.5zM4.500.5v12M8.500.5v12M.5 4.500h12M.5 8.500h12" /></svg></div>
      <Slot c="w-[38px] pr-0.5"><svg width="13" height="13" viewBox="0 0 13 13" fill="none" stroke="#555"><path d="M.5.5h12v12H.5zM3.500 2.500h6v8h-6zM5 4.500h3M5 6.500h3M5 8.500h3" /></svg></Slot>
      <Slot c="w-[38px] pr-0.5"><svg width="13" height="13" viewBox="0 0 13 13" fill="none" stroke="#555"><path d="M.5.5h12v12H.5zM4.500.5v7M8.500.5v7h-8" /></svg></Slot>
      <svg className="ml-[5px]" width="122" height="13" viewBox="0 0 122 13" stroke="#555"><path d="M0 6.500h7M114 6.500h8M118 2.500v8" strokeWidth="2" /><path d="M10 6.500h99M60.500 3v6" stroke="#aaa" /><path d="M75 1h4v11h-4z" fill="#444" stroke="none" /></svg>
      <span className="ml-[15px] tracking-[-0.05px]">205%</span>
    </div>
  );
}

function Taskbar() {
  return (
    <div className="flex h-[40px] items-center bg-[#020308] text-white">
      <Slot c="w-[48px]"><svg width="16" height="16" viewBox="0 0 16 16" fill="#fff"><path d="M0 2.300L6.500 1.400v6.200H0zM7.300 1.300L16 0v7.600H7.300zM0 8.400h6.500v6.200L0 13.700zM7.300 8.400H16V16l-8.700-1.300z" /></svg></Slot>
      <div className="flex h-full w-[344px] items-center bg-[#333]">
        <div className="ml-[9px] h-[22px] w-[22px] rounded-full border-[3px] border-[#f5f5f5]" />
        <span className="ml-[9px] w-[278px] text-[14px] tracking-[-0.05px] text-[#9b9b9b]">Ask me anything</span>
        <svg width="11" height="17" viewBox="0 0 11 17" fill="none" stroke="#999"><rect x="3.500" y=".5" width="4" height="10" rx="1.500" /><path d="M.5 7.500v5h10v-5M5.500 12.500v4M3 16.500h5" /></svg>
      </div>
      <Slot c="w-[47px]"><svg width="21" height="14" viewBox="0 0 21 14" fill="none" stroke="#eee" strokeWidth="1.200"><path d="M5 .6h11v12.800H5zM3 2.500H.6v9H3M18 2.500h2.400v9H18" /></svg></Slot>
      <svg className="ml-[5px]" width="4" height="17" viewBox="0 0 4 17" stroke="#444"><path d="M.5 0v17M3.500 0v17" /></svg>
      <Slot c="ml-[13px] w-[50px]"><FaEdgeLegacy size={21} className="text-[#1d7ad0]" /></Slot>
      <Slot c="w-[48px]"><svg width="22" height="19" viewBox="0 0 22 19"><path d="M0 1h8l1 2h13v16H0z" fill="#e6c25a" /><path d="M1 4h20v14H1z" fill="#f8e198" /><path d="M4 11h14v8h-4v-4H8v4H4z" fill="#3ba5d4" /></svg></Slot>
      <Slot c="w-[50px]"><svg width="24" height="24" viewBox="0 0 24 24"><path d="M17 1l6 2.500v17L17 23l-8-7.500L4 19l-3-1.500v-11L4 5l5 3.500z" fill="#68217a" stroke="#eee" strokeWidth="1.300" /><path d="M17.500 8v8L12 12zM4 9l3 3-3 3z" fill="#fff" /></svg></Slot>
      <Slot c="relative w-[49px]">
        <FaInternetExplorer size={20} className="text-[#6fd4f5]" />
        <svg className="absolute left-[13px] top-[7px]" width="23" height="25" viewBox="0 0 23 25" fill="none" stroke="#e9c83a" strokeWidth="2"><path d="M20 7c2-4 0-6-5-3C8 7 1 16 2 21c.5 2 3 1 5-.5" /></svg>
        <div className="absolute bottom-0 left-[4px] h-[2px] w-[40px] bg-[#76a9dc]" />
      </Slot>
      <Slot c="relative w-[48px] bg-[#353535]">
        <svg width="22" height="20" viewBox="0 0 22 20"><path d="M11 2h11v16H11z" fill="#eee" /><path d="M12 4.500h9M12 7.500h9M12 10.500h9M12 13.500h9M12 16.500h9M17 3v14" stroke="#217346" /><path d="M0 2l13-2v20L0 18z" fill="#217346" /><path d="M3.500 6l6 8M9.500 6l-6 8" stroke="#fff" strokeWidth="1.800" /></svg>
        <div className="absolute bottom-0 left-0 h-[2px] w-[48px] bg-[#76a9dc]" />
      </Slot>
      <Slot c="relative w-[50px]">
        <svg width="22" height="24" viewBox="0 0 22 24"><path d="M1 2l7-2 5 3v7l-5 2-5-3z" fill="#777" /><circle cx="9" cy="5" r="2.500" fill="#333" stroke="#aaa" /><path d="M5 10l-1 13M7 10v13M9 10l2 10" stroke="#555" strokeWidth="1.500" /><path d="M11 8h9v9h-9z" fill="#96a337" /><path d="M13 10h5v5h-5z" fill="#d1d97a" /></svg>
        <div className="absolute bottom-0 left-[5px] h-[2px] w-[40px] bg-[#76a9dc]" />
      </Slot>
      <svg className="ml-[322px]" width="29" height="30" viewBox="0 0 29 30"><circle cx="10.500" cy="19" r="9.500" fill="#3299bd" stroke="#eee" strokeWidth="1.800" /><path d="M7 17v3M12 14v2M6 23c3 2 6 2 9-1" stroke="#fff" strokeWidth="2" /><circle cx="19" cy="10.500" r="9.500" fill="#269fd0" /><path d="M19 9v8M19 3.500v3" stroke="#fff" strokeWidth="3.500" /><path d="M16 9.500h3M16 16.500h6" stroke="#fff" strokeWidth="1.500" /></svg>
      <svg className="ml-[7px]" width="13" height="8" viewBox="0 0 13 8" fill="none" stroke="#eee" strokeWidth="1.300"><path d="M.7 7l5.600-6 5.600 6" /></svg>
      <svg className="ml-[9px]" width="17" height="14" viewBox="0 0 17 14" fill="none" stroke="#eee"><path d="M5 2.500h11v8H4v-4M8 10.500v3M5 13.500h8M.5.5h4v4h-4zM2.500 4.500v6H4" /></svg>
      <svg className="ml-[8px]" width="15" height="14" viewBox="0 0 15 14"><path d="M1 9C-1 5 3 4 4 4c1-4 6-4 7 0 3 0 3 5 1 7H3z" fill="#ddd" /><path d="M4 9c0-3 2-4 4-4" fill="none" stroke="#333" /><circle cx="10.500" cy="9.500" r="4.200" fill="#c52b5a" /><path d="M9 8l3 3M12 8l-3 3" stroke="#fff" /></svg>
      <svg className="ml-[8px]" width="17" height="17" viewBox="0 0 17 17"><path d="M0 0h16v12h-4.500L8 16l-3.500-4H0z" fill="#f5f5f5" /><path d="M3 3.500h10M3 6.500h10M3 9.500h6" stroke="#111" strokeWidth="1.200" /></svg>
      <div className="ml-[10px] flex w-[58px] flex-col items-center whitespace-nowrap pb-0.5 text-[12px] leading-[17px] tracking-[-0.45px]"><span>12:19 PM</span><span>3/28/2016</span></div>
      <div className="ml-auto mr-[3px] h-full w-px bg-[#444]" />
    </div>
  );
}

export default function App() {
  return (
    <div className={`relative h-[720px] w-[1280px] overflow-hidden ${UI}`}>
      <Header />
      <Ribbon />
      <FormulaBar />
      <Sheet />
      <SheetTabs />
      <StatusBar />
      <Taskbar />
      <div className="absolute left-[892px] top-[684px] flex h-[20px] w-[116px] items-center justify-center whitespace-nowrap border border-[#bbb] bg-[#fdfdfd] text-[11.500px] tracking-[-0.1px] text-[#666]">Sum of selected cells</div>
      <svg className="absolute left-[932px] top-[668px]" width="14" height="20" viewBox="0 0 14 20"><path d="M1 1v15.500l3.700-3.300 2.600 6 2.600-1.200-2.500-5.700h5z" fill="#fff" stroke="#222" /></svg>
    </div>
  );
}
